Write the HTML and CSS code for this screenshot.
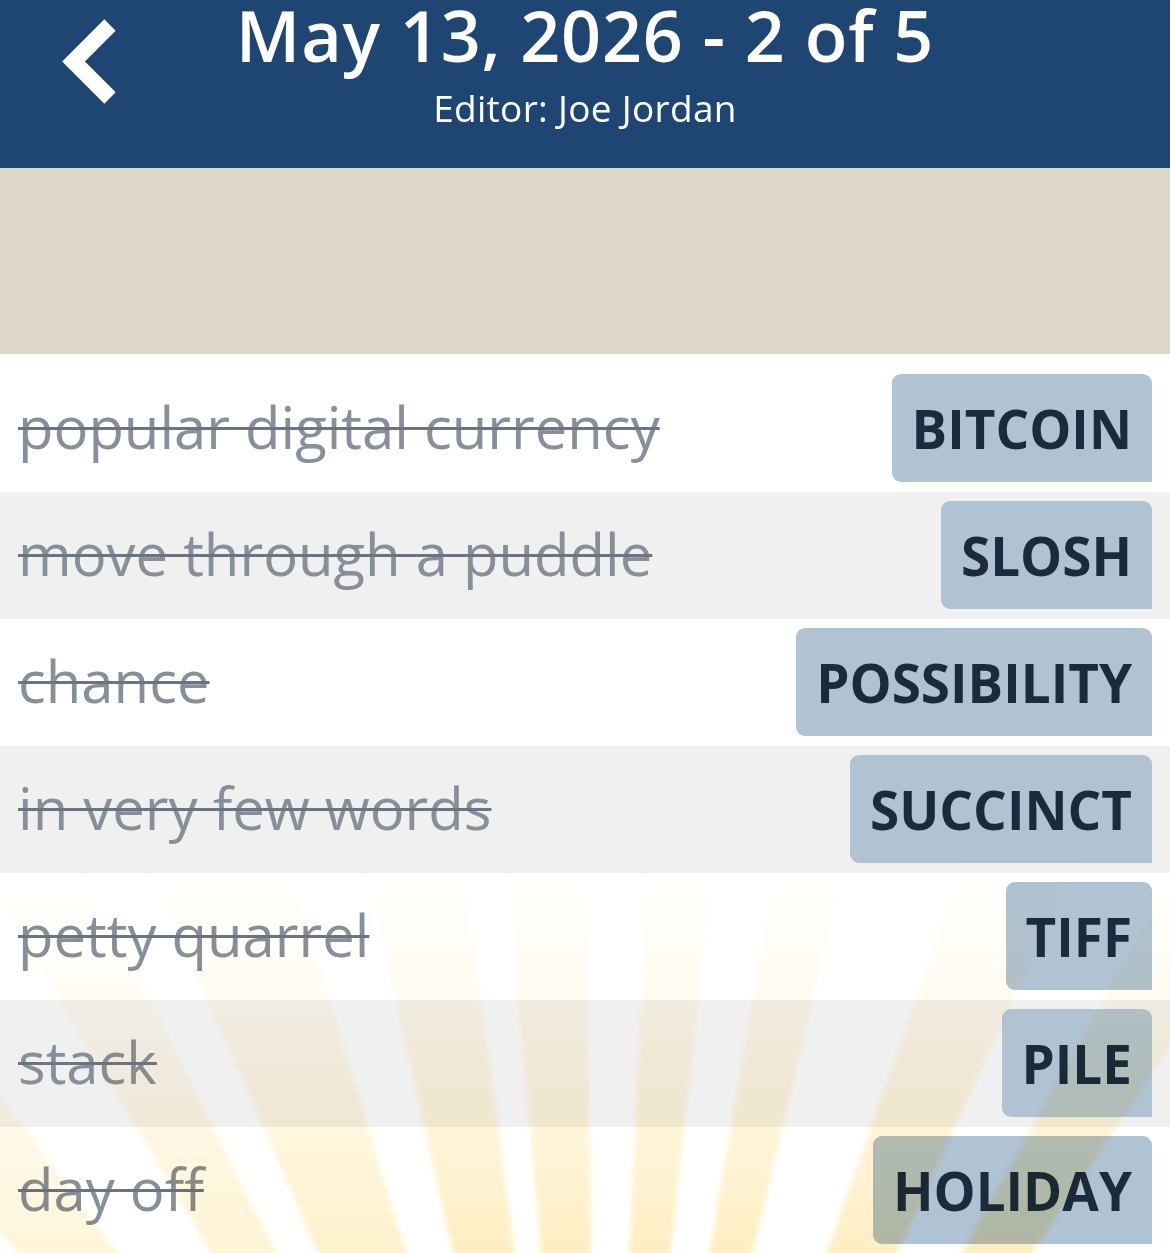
FILE: index.html
```html
<!DOCTYPE html>
<html lang="en">

<head>
    <meta charset="UTF-8">
    <meta name="viewport" content="width=device-width, initial-scale=1.0">
    <title>Puzzle Review</title>
    <link rel="stylesheet" href="styles.css">
</head>

<body>
    <header class="topbar">
        <a class="back" href="#" aria-label="Back">
            <svg width="130" height="120" viewBox="0 0 130 120">
                <polyline points="110,25 73.5,61.5 110,98" fill="none" stroke="#fff" stroke-width="16" stroke-linejoin="miter" />
            </svg>
        </a>
        <div class="titles">
            <h1>May 13, 2026 - 2 of 5</h1>
            <p>Editor: Joe Jordan</p>
        </div>
    </header>

    <div class="banner"></div>

    <main class="clues">
        <div class="row">
            <span class="clue">popular digital currency</span>
            <span class="answer">BITCOIN</span>
        </div>
        <div class="row">
            <span class="clue">move through a puddle</span>
            <span class="answer">SLOSH</span>
        </div>
        <div class="row">
            <span class="clue">chance</span>
            <span class="answer">POSSIBILITY</span>
        </div>
        <div class="row">
            <span class="clue">in very few words</span>
            <span class="answer">SUCCINCT</span>
        </div>
        <div class="row">
            <span class="clue">petty quarrel</span>
            <span class="answer">TIFF</span>
        </div>
        <div class="row">
            <span class="clue">stack</span>
            <span class="answer">PILE</span>
        </div>
        <div class="row">
            <span class="clue">day off</span>
            <span class="answer">HOLIDAY</span>
        </div>

        <!-- sunburst behind the last rows -->
        <svg class="rays" viewBox="0 354 1170 900" preserveAspectRatio="none">
            <defs>
                <linearGradient id="glow" gradientUnits="userSpaceOnUse" x1="0" y1="1253" x2="0" y2="860">
                    <stop offset="0" stop-color="#fde39a" stop-opacity="0.6" />
                    <stop offset="0.5" stop-color="#fde7a8" stop-opacity="0.3" />
                    <stop offset="1" stop-color="#fef0c8" stop-opacity="0" />
                </linearGradient>
                <filter id="soft">
                    <feGaussianBlur stdDeviation="2.5" />
                </filter>
            </defs>
            <g fill="url(#glow)" filter="url(#soft)">
                <polygon points="600,1900 -390,800 -220,800" opacity="0.6" />
                <polygon points="600,1900 -61,800 50,800" opacity="0.7" />
                <polygon points="600,1900 120,800 270,800" opacity="0.85" />
                <polygon points="600,1900 350,800 455,800" />
                <polygon points="600,1900 500,800 585,800" />
                <polygon points="600,1900 650,800 720,800" />
                <polygon points="600,1900 786,800 860,800" />
                <polygon points="600,1900 985,800 1105,800" />
                <polygon points="600,1900 1215,800 1335,800" />
            </g>
        </svg>
    </main>
</body>

</html>
```

FILE: styles.css
```css
body {
    margin: 0;
    width: 1170px;
    background: #fff;
    font-family: "Open Sans", sans-serif;
}

.topbar {
    display: grid;
    grid-template-columns: 1fr auto 1fr;
    height: 168px;
    background-color: #1f4672;
    color: #fff;
}

.back {
    display: block;
    width: 130px;
    height: 120px;
}

.back svg {
    display: block;
}

.titles {
    text-align: center;
}

.titles h1 {
    margin: 0;
    font-size: 70px;
    line-height: 70px;
    font-weight: 600;
    letter-spacing: 0.8px;
    white-space: nowrap;
}

.titles p {
    margin: 19px 0 0;
    font-size: 37px;
    line-height: 37px;
    letter-spacing: 0.3px;
}

.banner {
    height: 186px;
    background-color: #ded8cb;
}

.clues {
    position: relative;
    padding-top: 11px;
    overflow: hidden;
}

.row {
    display: flex;
    align-items: center;
    justify-content: space-between;
    height: 127px;
    padding: 0 18px;
}

.row:nth-child(even) {
    background-color: #f0f0f0;
}

.clue {
    font-size: 58px;
    line-height: 1;
    margin-top: -4px;
    color: #878f99;
    text-decoration: line-through;
    text-decoration-color: #6b7480;
    text-decoration-thickness: 3px;
    white-space: nowrap;
}

.answer {
    height: 108px;
    display: flex;
    align-items: center;
    padding: 0 20px;
    margin-top: -1px;
    background-color: #b0c3d3;
    border-radius: 9px 9px 0 9px;
    color: #1b2a3d;
    font-size: 53px;
    font-weight: 700;
    white-space: nowrap;
}

.rays {
    position: absolute;
    left: 0;
    top: 0;
    width: 1170px;
    height: 900px;
    pointer-events: none;
    mix-blend-mode: multiply;
}
```
